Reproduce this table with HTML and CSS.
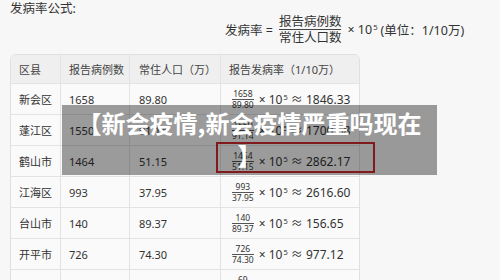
FILE: index.html
```html
<!DOCTYPE html>
<html lang="zh-CN">
<head>
<meta charset="utf-8">
<title>新会疫情</title>
<link rel="stylesheet" href="styles.css">
</head>
<body>
<div class="page">
  <div class="label">发病率公式:</div>
  <div class="formula">
    <span class="lhs">发病率 =</span>
    <span class="frac"><span class="num">报告病例数</span><span class="den">常住人口数</span></span>
    <span class="times">× 10<sup>5</sup></span>
    <span class="unit">(单位：1/10万)</span>
  </div>
  <div class="table-wrap">
    <div class="tbl">
      <div class="row head">
        <div class="cell">区县</div>
        <div class="cell">报告病例数</div>
        <div class="cell">常住人口（万）</div>
        <div class="cell">报告发病率（1/10万）</div>
      </div>
      <div class="row">
        <div class="cell">新会区</div><div class="cell">1658</div><div class="cell">89.80</div>
        <div class="cell calc"><span class="tfrac"><span>1658</span><span class="tden">89.80</span></span><span class="rest">× 10<sup>5</sup> ≈ 1846.33</span></div>
      </div>
      <div class="row">
        <div class="cell">蓬江区</div><div class="cell">1550</div><div class="cell">91.14</div>
        <div class="cell calc"><span class="tfrac"><span>1550</span><span class="tden">91.14</span></span><span class="rest">× 10<sup>5</sup> ≈ 1700.68</span></div>
      </div>
      <div class="row">
        <div class="cell">鹤山市</div><div class="cell">1464</div><div class="cell">51.15</div>
        <div class="cell calc"><span class="tfrac"><span>1464</span><span class="tden">51.15</span></span><span class="rest">× 10<sup>5</sup> ≈ 2862.17</span></div>
      </div>
      <div class="row">
        <div class="cell">江海区</div><div class="cell">993</div><div class="cell">37.95</div>
        <div class="cell calc"><span class="tfrac"><span>993</span><span class="tden">37.95</span></span><span class="rest">× 10<sup>5</sup> ≈ 2616.60</span></div>
      </div>
      <div class="row">
        <div class="cell">台山市</div><div class="cell">140</div><div class="cell">89.37</div>
        <div class="cell calc"><span class="tfrac"><span>140</span><span class="tden">89.37</span></span><span class="rest">× 10<sup>5</sup> ≈ 156.65</span></div>
      </div>
      <div class="row">
        <div class="cell">开平市</div><div class="cell">726</div><div class="cell">74.30</div>
        <div class="cell calc"><span class="tfrac"><span>726</span><span class="tden">74.30</span></span><span class="rest">× 10<sup>5</sup> ≈ 977.12</span></div>
      </div>
      <div class="row">
        <div class="cell">恩平市</div><div class="cell">69</div><div class="cell">49.52</div>
        <div class="cell calc"><span class="tfrac"><span>69</span><span class="tden">49.52</span></span><span class="rest">× 10<sup>5</sup> ≈ 139.34</span></div>
      </div>
    </div>
    <div class="mark"></div>
  </div>
</div>
<div class="overlay">【新会疫情,新会疫情严重吗现在<br>】</div>
</body>
</html>
```

FILE: styles.css
```css
html, body {
  margin: 0;
  padding: 0;
}
body {
  width: 500px;
  height: 280px;
  overflow: hidden;
  background: #f7f7f7;
  color: #333;
  font-family: "Noto Sans", "Noto Sans CJK SC", sans-serif;
  position: relative;
}
.page {
  padding: 0 10px;
}
.label {
  padding-top: 2px;
  font-size: 12.5px;
  line-height: 14px;
  color: #333;
}
.formula {
  margin-top: -2px;
  padding-left: 215px;
  display: flex;
  align-items: center;
  font-size: 12.5px;
  color: #333;
  white-space: nowrap;
}
.lhs {
  margin-right: 5px;
}
.frac {
  display: inline-flex;
  flex-direction: column;
  align-items: center;
  padding: 0 1px;
}
.num {
  line-height: 15px;
  border-bottom: 1px solid #444;
}
.den {
  line-height: 15px;
}
.times {
  margin-left: 5px;
}
.unit {
  margin-left: 3px;
}
sup {
  font-size: 0.62em;
  vertical-align: 0;
  position: relative;
  top: -0.55em;
  margin-left: 1px;
}
.table-wrap {
  position: relative;
  margin-top: 9px;
}
.tbl {
  display: inline-block;
  border: 1px solid #e0e0e0;
  border-radius: 6px;
  overflow: hidden;
  background: #fafafa;
  font-size: 11px;
  color: #333;
}
.row {
  display: grid;
  grid-template-columns: 49px 69px 91px 139px;
  height: 31px;
  border-top: 1px solid #e3e3e3;
  box-sizing: border-box;
}
.row.head {
  height: 28px;
  border-top: none;
  background: #efefef;
  color: #444;
}
.cell {
  display: flex;
  align-items: center;
  padding: 0 8px;
  border-left: 1px solid #e3e3e3;
  white-space: nowrap;
  overflow: hidden;
}
.cell:first-child {
  border-left: none;
}
.row .cell:nth-child(3) {
  padding-left: 9px;
}
.calc {
  padding-left: 10px;
}
.tfrac {
  display: inline-flex;
  flex-direction: column;
  align-items: center;
  font-size: 8.5px;
  line-height: 8px;
  padding: 0 1px;
}
.tfrac > span:first-child {
  border-bottom: 1px solid #555;
  align-self: stretch;
  text-align: center;
  padding-bottom: 1px;
}
.tden {
  padding-top: 1px;
}
.rest {
  font-size: 12px;
  margin-left: 4px;
}
.mark {
  position: absolute;
  left: 206px;
  top: 88px;
  width: 159px;
  height: 31px;
  box-sizing: border-box;
  border: 2.5px solid #d02a30;
}
.overlay {
  position: absolute;
  left: 62px;
  top: 105px;
  width: 375px;
  height: 70px;
  box-sizing: border-box;
  padding-top: 2px;
  background: rgba(0, 0, 0, 0.38);
  color: #fff;
  font-family: "Noto Sans CJK SC", sans-serif;
  font-weight: 700;
  font-size: 24px;
  line-height: 32px;
  text-align: center;
}
```
